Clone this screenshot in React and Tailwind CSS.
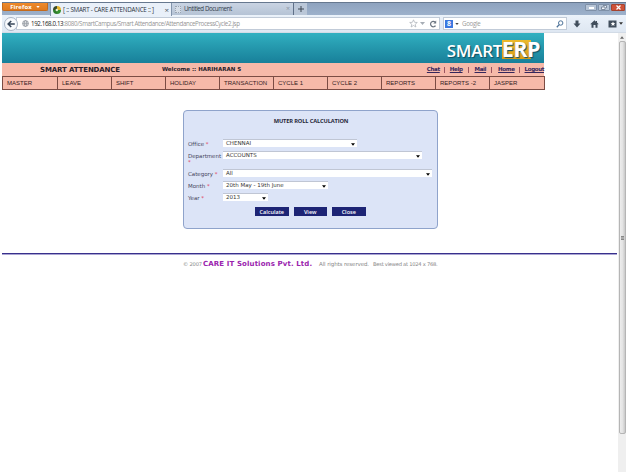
import React from 'react';

const menu = ['MASTER', 'LEAVE', 'SHIFT', 'HOLIDAY', 'TRANSACTION', 'CYCLE 1', 'CYCLE 2', 'REPORTS', 'REPORTS -2', 'JASPER'];

const rows = [
  { label: 'Office', value: 'CHENNAI', box: 'w-[134px]', row: 'h-[12px]' },
  { label: 'Department', value: 'ACCOUNTS', box: 'w-[199px]', row: 'h-[18px]' },
  { label: 'Category', value: 'All', box: 'w-[209px]', row: 'h-[12px]' },
  { label: 'Month', value: '20th May - 19th June', box: 'w-[105px]', row: 'h-[12px]' },
  { label: 'Year', value: '2013', box: 'w-[45px]', row: 'h-[12px]' },
];

function Caret({ className = '' }) {
  return (
    <svg className={className} width="5" height="3" viewBox="0 0 5 3">
      <path d="M0 0h5L2.5 3z" fill="currentColor" />
    </svg>
  );
}

function SiteIcon() {
  return (
    <svg width="8" height="8" viewBox="0 0 8 8">
      <path d="M4 4V0a4 4 0 0 0-4 4z" fill="#3a4a28" />
      <path d="M4 4V0a4 4 0 0 1 4 4z" fill="#e5b52a" />
      <path d="M4 4h4a4 4 0 0 1-4 4z" fill="#35912f" />
      <path d="M4 4v4a4 4 0 0 1-4-4z" fill="#2d7c2c" />
      <circle cx="3.8" cy="4" r="1.2" fill="#e8efd5" />
    </svg>
  );
}

function TabBar() {
  return (
    <div className="flex h-[13px] items-start border-t border-[#66788f] bg-gradient-to-b from-[#8ea3bf] to-[#9db1cb]">
      <div className="flex h-[8px] w-[46px] items-center justify-center gap-[4px] rounded-b-[2px] border border-t-0 border-[#c46a1c] bg-gradient-to-b from-[#ee8a2c] to-[#e07a1e] text-[6px] font-bold tracking-[0.1px] text-white">
        <span className="leading-[6px]">Firefox</span>
        <Caret className="h-[2px] w-[4px]" />
      </div>
      <div className="ml-[2px] flex h-[13px] w-[122px] items-center border-x border-[#8294ab] bg-[#e9f0f9] text-[6.2px] text-[#2a3140]">
        <span className="ml-[2px]"><SiteIcon /></span>
        <span className="ml-[2px] whitespace-nowrap tracking-[-0.22px]">[ :: SMART - CARE ATTENDANCE :: ]</span>
        <span className="ml-auto mr-[2px] text-[8px] text-[#4d5560]">×</span>
      </div>
      <div className="flex h-[12px] w-[122px] items-center border-r border-[#5f7088] bg-gradient-to-b from-[#c9d4e3] to-[#b5c3d5] text-[6.2px] text-[#343c4b]">
        <span className="ml-[3px] h-[7px] w-[6px] border border-dotted border-[#98a3b0] bg-[#d5dde7]" />
        <span className="ml-[3px] whitespace-nowrap tracking-[-0.42px]">Untitled Document</span>
        <span className="ml-auto mr-[3px] text-[7px] text-[#8c97a5]">×</span>
      </div>
      <div className="flex h-[12px] w-[13px] items-center justify-center bg-[#bac7d8]">
        <svg width="6" height="6" viewBox="0 0 6 6"><path d="M3 0v6M0 3h6" stroke="#3e4855" /></svg>
      </div>
      <div className="ml-auto mr-[1px] mt-[1px] flex h-[7px] gap-[1px]">
        <div className="flex w-[12px] items-center justify-center rounded-[1px] border border-[#7e90a8] bg-[#b6c4d6]">
          <span className="h-[2px] w-[5px] bg-white" />
        </div>
        <div className="flex w-[12px] items-center justify-center rounded-[1px] border border-[#7e90a8] bg-[#b6c4d6]">
          <svg width="6" height="5" viewBox="0 0 6 5"><path d="M2 .5h3.5v2.5M.5 2h3.500v2.500h-3.500z" fill="#f2f5fa" stroke="#6b7a8e" strokeWidth=".8" /></svg>
        </div>
        <div className="flex w-[14px] items-center justify-center rounded-[1px] border border-[#a5432f] bg-[#cf5238]">
          <svg width="5" height="5" viewBox="0 0 5 5"><path d="M.5 .5l4 4M4.500 .5l-4 4" stroke="#fff" strokeWidth="1.200" /></svg>
        </div>
      </div>
    </div>
  );
}

function NavBar() {
  return (
    <div className="flex h-[18px] items-center border-b border-[#d2dbe6] bg-gradient-to-b from-[#ebf2fa] to-[#dee7f2] text-[6.2px]">
      <div className="z-10 ml-[2px] flex h-[14px] w-[14px] items-center justify-center rounded-full border border-[#a9b5c5] bg-[#f8fafd]">
        <svg width="8" height="8" viewBox="0 0 8 8"><path d="M7.800 4H1.500M4.200 1L1.200 4l3 3" fill="none" stroke="#37475a" strokeWidth="1.600" /></svg>
      </div>
      <div className="-ml-[2px] flex h-[13px] w-[424px] items-center border border-[#c1cbd8] bg-white">
        <svg className="ml-[5px]" width="7" height="7" viewBox="0 0 7 7" fill="none" stroke="#8d949c" strokeWidth=".7">
          <circle cx="3.500" cy="3.500" r="3" /><ellipse cx="3.500" cy="3.500" rx="1.300" ry="3" /><path d="M.5 3.500h6M1 2h5M1 5h5" />
        </svg>
        <span className="ml-[2px] whitespace-nowrap tracking-[-0.37px] text-[#969696]">
          <span className="text-[#222]">192.168.0.13</span>:8080/SmartCampus/Smart Attendance/AttendanceProcessCycle2.jsp
        </span>
        <svg className="ml-auto" width="9" height="9" viewBox="0 0 9 9"><path d="M4.500 .8l1.100 2.500 2.700.2-2.100 1.800.7 2.700-2.400-1.500-2.400 1.500.7-2.700L.7 3.500l2.700-.2z" fill="#fff" stroke="#a7adb5" strokeWidth=".7" /></svg>
        <Caret className="ml-[2px] text-[#a7adb5]" />
        <svg className="ml-[4px] mr-[2px]" width="8" height="8" viewBox="0 0 8 8"><path d="M6.500 5.600A2.700 2.700 0 1 1 6 2" fill="none" stroke="#6b7582" strokeWidth="1.200" /><path d="M7.200 .5v3H4.300z" fill="#6b7582" /></svg>
      </div>
      <div className="ml-[3px] flex h-[13px] w-[124px] items-center border border-[#c1cbd8] bg-white">
        <span className="ml-[1px] flex h-[8px] w-[8px] items-center justify-center bg-[#3b78e0] text-[7px] font-bold leading-[8px] text-white">8</span>
        <Caret className="ml-[2px] h-[2px] w-[4px] text-[#444]" />
        <span className="ml-[3px] tracking-[-0.3px] text-[#999]">Google</span>
        <svg className="ml-auto mr-[2px]" width="8" height="8" viewBox="0 0 8 8"><circle cx="4.700" cy="3" r="2.200" fill="none" stroke="#4c7299" /><path d="M3.200 4.600L.8 7.300" stroke="#4c7299" strokeWidth="1.300" /></svg>
      </div>
      <svg className="ml-[6px]" width="8" height="8" viewBox="0 0 8 8"><path d="M2.500 .5h3v3H7.500L4 7.500.5 3.500h2z" fill="#414e5c" /></svg>
      <svg className="ml-[9px]" width="9" height="8" viewBox="0 0 9 8"><path d="M4.500 .2L.2 4.300h1.300V7.800h2V5h2v2.800h2V4.300h1.300L7 2.600V1H6v.7z" fill="#414e5c" /></svg>
      <svg className="ml-[9px]" width="9" height="8" viewBox="0 0 9 8"><path d="M.5 .5h8v7h-8z" fill="#414e5c" /><path d="M5 1.500l.7 1.600 1.600.1-1.200 1.100.4 1.700L5 5l-1.500 1 .4-1.700-1.200-1.100 1.600-.1z" fill="#fff" /></svg>
      <Caret className="ml-[2px] h-[3px] w-[4px] text-[#333]" />
    </div>
  );
}

function Banner() {
  return (
    <div className="flex h-[30px] items-start justify-end bg-gradient-to-b from-[#31b0c1] via-[#2497ac] to-[#18809a]">
      <div className="mr-[4px] mt-[7px] flex items-start font-['Open_Sans',sans-serif] text-white [text-shadow:1px_1px_1px_#0e4f63]">
        <span className="mt-[2px] text-[17px] font-semibold leading-[18px] tracking-[-0.3px]">SMART</span>
        <span className="h-[19px] w-[29px] whitespace-nowrap bg-gradient-to-b from-[#ecb92c] to-[#dc9e14] text-[21px] font-bold leading-[18px] tracking-[-0.2px]">ERP</span>
        <span className="w-[9px]" />
      </div>
    </div>
  );
}

function Header() {
  return (
    <div className="w-[542px]">
      <Banner />
      <div className="flex h-[13px] items-center bg-[#f6b9a9] text-[#27202a]">
        <span className="ml-[38px] w-[122px] whitespace-nowrap text-[7px] font-bold leading-[12px] tracking-[-0.12px]">SMART ATTENDANCE</span>
        <span className="whitespace-nowrap text-[5.5px] font-bold">Welcome :: HARIHARAN S</span>
        <span className="ml-auto flex items-center whitespace-nowrap text-[5.5px] font-bold tracking-[-0.35px] text-[#35265c]">
          <u className="mr-[4px]">Chat</u><i className="mr-[5px] h-[6px] w-px bg-[#9b5560]" />
          <u>Help</u><i className="ml-[5px] mr-[6px] h-[6px] w-px bg-[#9b5560]" />
          <u>Mail</u><i className="ml-[5px] mr-[6px] h-[6px] w-px bg-[#9b5560]" />
          <u>Home</u><i className="ml-[4px] mr-[5px] h-[6px] w-px bg-[#9b5560]" />
          <u>Logout</u>
        </span>
      </div>
      <div className="flex h-[14px] w-[543px] border border-[#7b4c44] bg-[#f6b9a9] font-['Liberation_Sans',Arial,sans-serif]">
        {menu.map((item, i) => (
          <div key={item} className={'flex w-[54px] shrink-0 items-center whitespace-nowrap pl-[4px] text-[6px] font-medium leading-[12px] tracking-[0.02px] text-[#33201e] ' + (i ? 'border-l border-[#7b4c44]' : '')}>
            {item}
          </div>
        ))}
      </div>
    </div>
  );
}

function Field({ label, value, box, row }) {
  return (
    <div className={'flex items-start ' + row}>
      <div className="mt-[2px] w-[35px] shrink-0 text-[5.5px] leading-[6px] tracking-[-0.02px] text-[#45455c]">
        {label} <span className="text-[#e0405c]">*</span>
      </div>
      <div className={'flex h-[8px] items-center justify-between border-t border-[#c0c6d4] bg-white pl-[3px] pr-[2px] text-[5.5px] text-[#333] ' + box}>
        <span className="whitespace-nowrap leading-[7px]">{value}</span>
        <Caret className="mt-[2px] h-[3px] w-[4px] text-black" />
      </div>
    </div>
  );
}

function Panel() {
  return (
    <div className="ml-[181px] mt-[20px] h-[119px] w-[255px] rounded-[4px] border border-[#8fa3cb] bg-[#dce4f7] pl-[4px]">
      <h1 className="mt-[6px] h-[8px] pr-[3px] text-center font-['Open_Sans',sans-serif] text-[5.7px] font-bold leading-[8px] tracking-[-0.14px] text-[#26283a]">MUTER ROLL CALCULATION</h1>
      <div className="mt-[14px]">
        {rows.map((r) => <Field key={r.label} {...r} />)}
      </div>
      <div className="ml-[67px] mt-[2px] flex gap-[5px] font-['Open_Sans',sans-serif]">
        {['Calculate', 'View', 'Close'].map((b) => (
          <button key={b} className="flex h-[9px] w-[33.500px] items-center justify-center bg-[#1d2475] text-[5.5px] font-semibold leading-[8px] text-white">{b}</button>
        ))}
      </div>
    </div>
  );
}

function Scrollbar() {
  return (
    <div className="flex w-[8px] flex-col items-center bg-[#efefef]">
      <div className="flex h-[8px] items-center"><Caret className="h-[3px] w-[4px] rotate-180 text-[#666]" /></div>
      <div className="flex h-[393px] w-[7px] items-center justify-center rounded-[2px] border border-[#b5b5b5] bg-gradient-to-r from-[#ededed] via-[#e4e4e4] to-[#c9c9c9]">
        <span className="h-[4px] w-[3px] border-y border-[#888] bg-[#aaa]" />
      </div>
    </div>
  );
}

export default function App() {
  return (
    <div className="flex h-[472px] w-[628px] flex-col overflow-hidden bg-white pl-[2px] pr-[2px] pt-[2px] font-['DejaVu_Sans',Verdana,sans-serif]">
      <div className="font-['Open_Sans',sans-serif]">
        <TabBar />
        <NavBar />
      </div>
      <div className="flex flex-1">
        <main className="w-[616px]">
          <Header />
          <Panel />
          <div className="mt-[24px] h-[2px] w-[615px] border-t border-[#38308c] bg-[#aaa5d3]" />
          <footer className="ml-[181px] mt-[4px] flex h-[12px] items-baseline whitespace-nowrap text-[5.5px] tracking-[-0.1px] text-[#888]">
            <span className="w-[20px] text-[5.2px] tracking-[-0.2px]">© 2007</span>
            <b className="w-[110px] text-[7px] tracking-[0.12px] text-[#9a24ae]">CARE IT Solutions Pvt. Ltd.</b>
            <span className="ml-[6px] w-[54px]">All rights reserved.</span>
            <span className="text-[5.2px] tracking-[-0.26px]">Best viewed at 1024 x 768.</span>
          </footer>
        </main>
        <Scrollbar />
      </div>
    </div>
  );
}
